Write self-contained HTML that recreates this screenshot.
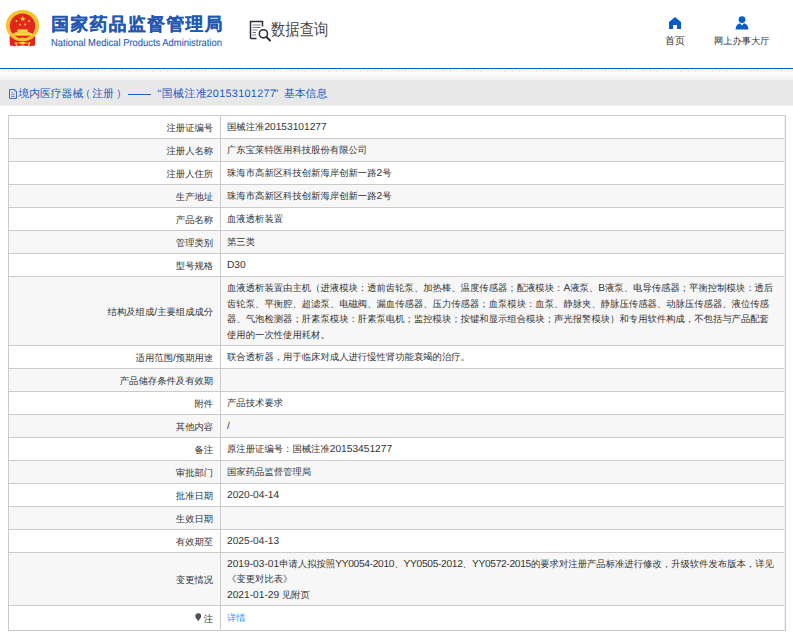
<!DOCTYPE html>
<html><head><meta charset="utf-8">
<style>
*{margin:0;padding:0;box-sizing:border-box}
html,body{width:793px;height:637px;overflow:hidden;background:#fff}
body{position:relative;font-family:"Liberation Sans",sans-serif;color:#333;text-rendering:geometricPrecision}
.abs{position:absolute}
#title{left:51.3px;top:11.2px;font-size:17.7px;font-weight:bold;-webkit-text-stroke:0.25px #2458b0;color:#2458b0;letter-spacing:1.5px;white-space:nowrap;line-height:26px}
#sub{left:51px;top:37.5px;font-size:10.2px;letter-spacing:0;transform:scaleX(0.923);transform-origin:0 0;color:#2a5cb4;-webkit-text-stroke:0.1px #2a5cb4;white-space:nowrap;line-height:12px}
#dq{left:271px;top:17.5px;font-weight:500;font-size:16.8px;color:#4a4a4a;white-space:nowrap;line-height:24px;transform:scaleX(0.853);transform-origin:0 0}
.navt{font-size:9.6px;color:#333;white-space:nowrap;line-height:12px}
#blue{left:0;top:68px;width:793px;height:1px;background:#0461c6}
#hatch{left:0;top:70px;width:793px;height:2px;background:repeating-linear-gradient(135deg,#fff 0 1.5px,#e6e6e6 1.5px 2.44px)}
#grad{left:0;top:72px;width:793px;height:8px;background:linear-gradient(#fff,#f2f2f2)}
#bar{left:0;top:80px;width:793px;height:26px;background:#e8e8e8;border-bottom:0.6px solid #eef1f8}
#crumb{left:0;top:87.3px;font-size:10.8px;font-weight:500;color:#1a5ac4;white-space:nowrap;line-height:15px}
.c1{position:absolute;top:0}
#box{left:8px;top:115px;width:778px;height:516px;border:1px solid #cccaca;background:#eef1f9}
.row{position:absolute;left:0;width:775px;background:#fff;display:flex;align-items:center;border-bottom:1px solid #cccaca}
.row.g{background:#f7f7f7}
.row .l{width:212px;flex-shrink:0;height:100%;border-right:1px solid #cccaca;display:flex;align-items:center;justify-content:flex-end;padding-right:6.8px;padding-top:2px;font-size:9.35px;white-space:nowrap}
.row .v{flex:1;padding-left:6px;padding-top:2px;font-size:9.35px;line-height:15.4px;white-space:nowrap}
a{color:#3b8cff;text-decoration:none}
.n{font-size:10.2px}
</style></head><body>
<!-- emblem -->
<svg class="abs" style="left:0;top:0" width="50" height="50" viewBox="0 0 50 50">
  <path d="M9.6 36 H35.2 L35 45.6 L29.5 46.3 L22.6 45.6 L15.7 46.3 L9.8 45.6 Z" fill="#e2241c"/>
  <ellipse cx="22.6" cy="25.6" rx="16.7" ry="15.6" fill="#f2c232"/>
  <ellipse cx="22.5" cy="25.9" rx="12.7" ry="12.4" fill="#e3261d"/>
  <polygon points="22.8,15.9 23.6,18 25.8,18 24,19.3 24.7,21.4 22.8,20.1 20.9,21.4 21.6,19.3 19.8,18 22,18" fill="#f6d13a"/>
  <circle cx="16.5" cy="20.9" r="1" fill="#f6d13a"/><circle cx="29" cy="20.9" r="1" fill="#f6d13a"/>
  <circle cx="20" cy="24.4" r="1" fill="#f6d13a"/><circle cx="25.2" cy="24.4" r="1" fill="#f6d13a"/>
  <rect x="17.4" y="29.4" width="10.3" height="2.6" fill="#f6d83e"/>
  <rect x="13" y="33" width="19" height="2.7" fill="#f6d83e"/>
  <rect x="15" y="32" width="15" height="1" fill="#f1c43a"/>
  <ellipse cx="22.6" cy="39.3" rx="3.2" ry="1.7" fill="#f2c232"/>
  <path d="M15.2 43 H30" stroke="#f6d13a" stroke-width="0.9"/>
  <ellipse cx="22.6" cy="43.1" rx="2.7" ry="1.4" fill="#f6d13a"/>
  <path d="M15.3 42.4 L16.8 46 M29.9 42.4 L28.4 46" stroke="#f6d13a" stroke-width="1.5"/>
</svg>
<div id="title" class="abs">国家药品监督管理局</div>
<div id="sub" class="abs">National Medical Products Administration</div>
<!-- data query icon -->
<svg class="abs" style="left:248px;top:19px" width="26" height="24" viewBox="0 0 26 24">
  <path d="M2.5 19.5 V2.5 H14.5 V7.5" fill="none" stroke="#2e2e3c" stroke-width="1.5"/>
  <path d="M2.5 19.5 H8.5" fill="none" stroke="#2e2e3c" stroke-width="1.5"/>
  <path d="M4.5 6 H12.5 M4.5 8.5 H12.5 M4.5 11 H9.5 M4.5 13.5 H8 M4.5 16 H8" stroke="#7a7a88" stroke-width="1"/>
  <circle cx="15.4" cy="14.8" r="4.1" fill="none" stroke="#2e2e3c" stroke-width="1.6"/>
  <path d="M18.5 18 L22 21.5" stroke="#2e2e3c" stroke-width="2" stroke-linecap="round"/>
</svg>
<div id="dq" class="abs">数据查询</div>
<!-- home -->
<svg class="abs" style="left:668px;top:16px" width="14" height="14" viewBox="0 0 14 14">
  <path d="M1 6 L7 1 L13 6 V13 H9 V9 H5 V13 H1 Z" fill="#0b5cc9"/>
</svg>
<div class="abs navt" style="left:665px;top:36.4px;font-size:10px">首页</div>
<svg class="abs" style="left:735px;top:15px" width="15" height="16" viewBox="0 0 15 16">
  <circle cx="7" cy="4.6" r="3.4" fill="#0b5cc9"/>
  <path d="M0.5 14.5 Q1 9 5 8.3 L7 10.5 L9 8.3 Q13 9 13.5 14.5 Z" fill="#0b5cc9"/>
</svg>
<div class="abs navt" style="left:714px;top:35px;font-size:9.25px">网上办事大厅</div>
<div id="blue" class="abs"></div>
<div id="hatch" class="abs"></div>
<div id="grad" class="abs"></div>
<div id="bar" class="abs"></div>
<svg class="abs" style="left:8px;top:88px" width="10" height="12" viewBox="8 88 10 12">
  <path d="M9.5 89.5 H14.8 L16.5 91.3 V98.4 H9.5 Z" fill="none" stroke="#2d62c8" stroke-width="0.95"/>
  <path d="M14.6 89.6 V91.5 H16.4" fill="none" stroke="#5a86d8" stroke-width="0.7"/>
  <path d="M11.1 92.3 H12.7 M11.1 94.3 H14.9 M11.1 96.4 H14.9" stroke="#6a7fd0" stroke-width="0.9"/>
</svg>
<div id="crumb" class="abs"><span class="c1" style="left:18.4px">境内医疗器械</span><span class="c1" style="left:80px">（</span><span class="c1" style="left:92.2px">注册</span><span class="c1" style="left:116px">）</span><span class="c1" style="left:128px;top:6.9px;width:23px;height:1px;background:#1f5fc0"></span><span class="c1" style="left:157.5px;letter-spacing:0.6px">“国械注准</span><span class="c1" style="left:206.5px;letter-spacing:0.33px">20153101277</span><span class="c1" style="left:274.5px">”</span><span class="c1" style="left:284px">基本信息</span></div>
<div id="box" class="abs">
<!--ROWS-->
<div class="row" style="top:0.00px;height:23.00px"><div class="l">注册证编号</div><div class="v">国械注准<span class="n">20153101277</span></div></div>
<div class="row g" style="top:23.00px;height:23.00px"><div class="l">注册人名称</div><div class="v">广东宝莱特医用科技股份有限公司</div></div>
<div class="row" style="top:46.00px;height:23.00px"><div class="l">注册人住所</div><div class="v">珠海市高新区科技创新海岸创新一路<span class="n">2</span>号</div></div>
<div class="row g" style="top:69.00px;height:23.00px"><div class="l">生产地址</div><div class="v">珠海市高新区科技创新海岸创新一路<span class="n">2</span>号</div></div>
<div class="row" style="top:92.00px;height:23.00px"><div class="l">产品名称</div><div class="v">血液透析装置</div></div>
<div class="row g" style="top:115.00px;height:23.00px"><div class="l">管理类别</div><div class="v">第三类</div></div>
<div class="row" style="top:138.00px;height:23.00px"><div class="l">型号规格</div><div class="v"><span class="n">D30</span></div></div>
<div class="row g" style="top:161.00px;height:69.20px"><div class="l">结构及组成<span class="n">/</span>主要组成成分</div><div class="v">血液透析装置由主机（进液模块：透前齿轮泵、加热棒、温度传感器；配液模块：<span class="n">A</span>液泵、<span class="n">B</span>液泵、电导传感器；平衡控制模块：透后<br>齿轮泵、平衡腔、超滤泵、电磁阀、漏血传感器、压力传感器；血泵模块：血泵、静脉夹、静脉压传感器、动脉压传感器、液位传感<br>器、气泡检测器；肝素泵模块：肝素泵电机；监控模块；按键和显示组合模块；声光报警模块）和专用软件构成，不包括与产品配套<br>使用的一次性使用耗材。</div></div>
<div class="row" style="top:230.20px;height:23.00px"><div class="l">适用范围<span class="n">/</span>预期用途</div><div class="v">联合透析器，用于临床对成人进行慢性肾功能衰竭的治疗。</div></div>
<div class="row g" style="top:253.20px;height:23.00px"><div class="l">产品储存条件及有效期</div><div class="v"></div></div>
<div class="row" style="top:276.20px;height:23.00px"><div class="l">附件</div><div class="v">产品技术要求</div></div>
<div class="row g" style="top:299.20px;height:23.00px"><div class="l">其他内容</div><div class="v"><span class="n">/</span></div></div>
<div class="row" style="top:322.20px;height:23.00px"><div class="l">备注</div><div class="v">原注册证编号：国械注准<span class="n">20153451277</span></div></div>
<div class="row g" style="top:345.20px;height:23.00px"><div class="l">审批部门</div><div class="v">国家药品监督管理局</div></div>
<div class="row" style="top:368.20px;height:23.00px"><div class="l">批准日期</div><div class="v"><span class="n">2020-04-14</span></div></div>
<div class="row g" style="top:391.20px;height:23.00px"><div class="l">生效日期</div><div class="v"></div></div>
<div class="row" style="top:414.20px;height:23.00px"><div class="l">有效期至</div><div class="v"><span class="n">2025-04-13</span></div></div>
<div class="row g" style="top:437.20px;height:53.00px"><div class="l">变更情况</div><div class="v"><span class="n">2019-03-01</span>申请人拟按照<span class="n" style="letter-spacing:-0.3px">YY0054-2010</span>、<span class="n" style="letter-spacing:-0.3px">YY0505-2012</span>、<span class="n" style="letter-spacing:-0.3px">YY0572-2015</span>的要求对注册产品标准进行修改，升级软件发布版本，详见<br>《变更对比表》<br><span class="n">2021-01-29</span> 见附页</div></div>
<div class="row" style="top:490.20px;height:24.00px;border-bottom:none"><div class="l"><svg width="6.5" height="8.5" viewBox="0 0 7 9" style="margin-right:2.3px;position:relative;top:-1.6px"><path d="M3.5 8.7 C2.6 7.2 0.3 5.3 0.3 3.4 A3.2 3.2 0 0 1 6.7 3.4 C6.7 5.3 4.4 7.2 3.5 8.7 Z" fill="#505058"/></svg>注</div><div class="v"><a>详情</a></div></div>
<!--/ROWS-->
</div>
</body></html>
